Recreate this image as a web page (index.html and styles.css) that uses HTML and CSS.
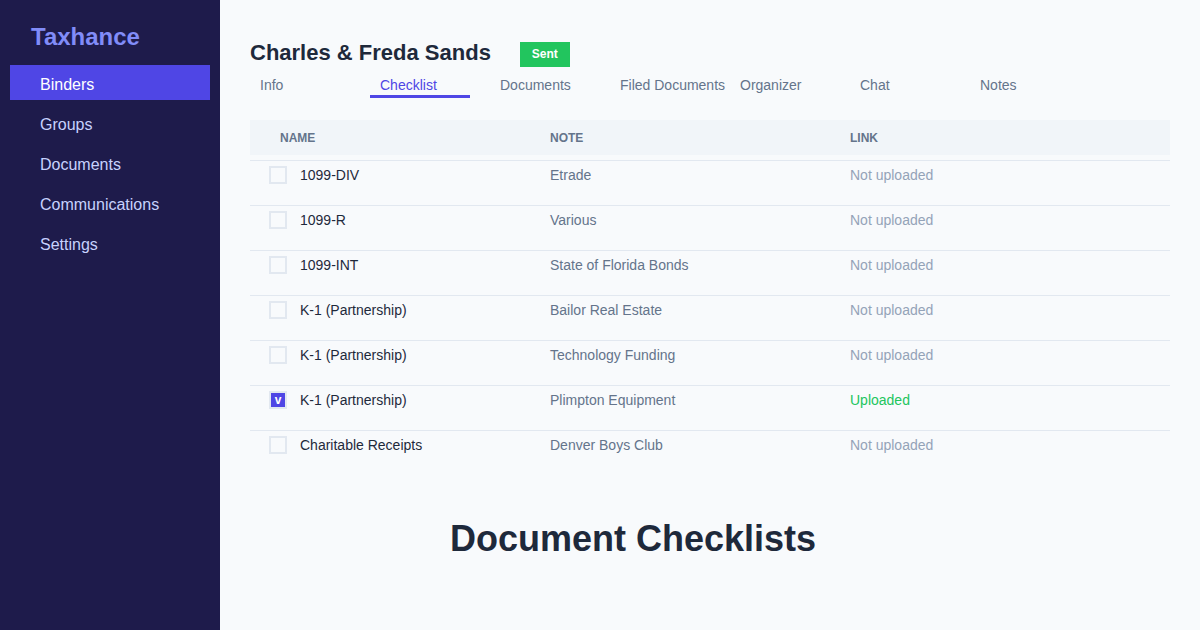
FILE: index.html
```html
<!DOCTYPE html>
<html>
<head>
<meta charset="utf-8">
<link rel="stylesheet" href="styles.css">
</head>
<body>
<div class="app">
  <aside class="sidebar">
    <div class="logo">Taxhance</div>
    <nav class="nav">
      <a class="nav-item active">Binders</a>
      <a class="nav-item">Groups</a>
      <a class="nav-item">Documents</a>
      <a class="nav-item">Communications</a>
      <a class="nav-item">Settings</a>
    </nav>
  </aside>
  <main class="main">
    <div class="head">
      <h1 class="client">Charles &amp; Freda Sands</h1>
      <span class="badge">Sent</span>
    </div>
    <div class="tabs">
      <span class="tab">Info</span>
      <span class="tab active">Checklist</span>
      <span class="tab">Documents</span>
      <span class="tab">Filed Documents</span>
      <span class="tab">Organizer</span>
      <span class="tab">Chat</span>
      <span class="tab">Notes</span>
    </div>
    <div class="table">
      <div class="thead">
        <span>Name</span><span>Note</span><span>Link</span>
      </div>
      <div class="tbody">
        <div class="row"><span class="name"><span class="box"></span>1099-DIV</span><span class="note">Etrade</span><span class="link">Not uploaded</span></div>
        <div class="row"><span class="name"><span class="box"></span>1099-R</span><span class="note">Various</span><span class="link">Not uploaded</span></div>
        <div class="row"><span class="name"><span class="box"></span>1099-INT</span><span class="note">State of Florida Bonds</span><span class="link">Not uploaded</span></div>
        <div class="row"><span class="name"><span class="box"></span>K-1 (Partnership)</span><span class="note">Bailor Real Estate</span><span class="link">Not uploaded</span></div>
        <div class="row"><span class="name"><span class="box"></span>K-1 (Partnership)</span><span class="note">Technology Funding</span><span class="link">Not uploaded</span></div>
        <div class="row"><span class="name"><span class="box checked">v</span>K-1 (Partnership)</span><span class="note">Plimpton Equipment</span><span class="link done">Uploaded</span></div>
        <div class="row"><span class="name"><span class="box"></span>Charitable Receipts</span><span class="note">Denver Boys Club</span><span class="link">Not uploaded</span></div>
      </div>
    </div>
    <h2 class="caption">Document Checklists</h2>
  </main>
</div>
</body>
</html>
```
FILE: styles.css
```css
* { box-sizing: border-box; }
html, body { margin: 0; padding: 0; }
body {
  font-family: "Liberation Sans", Arial, sans-serif;
  background: #f8fafc;
  width: 1200px;
  height: 630px;
  overflow: hidden;
}
.app { display: flex; height: 630px; }
.sidebar {
  width: 220px;
  flex: none;
  background: #1e1b4b;
  padding: 22px 10px 0;
}
.logo {
  font-size: 24px;
  font-weight: 700;
  color: #818cf8;
  line-height: 30px;
  padding-left: 21px;
  margin-bottom: 13px;
}
.nav { display: flex; flex-direction: column; gap: 5px; }
.nav-item {
  display: block;
  height: 35px;
  padding-top: 4px;
  line-height: 31px;
  padding-left: 30px;
  font-size: 16px;
  color: #c7d2fe;
}
.nav-item.active { background: #4f46e5; color: #ffffff; }
.main { flex: 1; padding: 40px 30px 0; }
.head { display: flex; align-items: center; gap: 29px; height: 26px; }
.client {
  margin: 0;
  font-size: 22px;
  line-height: 26px;
  font-weight: 700;
  color: #1e293b;
}
.badge {
  display: inline-block;
  width: 50px;
  height: 25px;
  line-height: 25px;
  margin-top: 2px;
  text-align: center;
  background: #22c55e;
  color: #fff;
  font-size: 12px;
  font-weight: 700;
}
.tabs { display: flex; gap: 20px; margin-top: 8px; }
.tab {
  width: 100px;
  flex: none;
  padding: 1px 10px 0;
  line-height: 20px;
  font-size: 14px;
  color: #64748b;
  white-space: nowrap;
  border-bottom: 3px solid transparent;
}
.tab.active { color: #4f46e5; border-bottom-color: #4f46e5; }
.table { margin-top: 22px; width: 920px; }
.thead {
  display: grid;
  grid-template-columns: 270px 300px 1fr;
  padding-left: 30px;
  height: 35px;
  align-items: center;
  background: #f1f5f9;
  font-size: 12px;
  font-weight: 700;
  color: #64748b;
  text-transform: uppercase;
}
.tbody { margin-top: 5px; }
.row {
  display: grid;
  grid-template-columns: 280px 300px 1fr;
  padding: 5px 0 21px 19px;
  border-top: 1px solid #e2e8f0;
  font-size: 14px;
  line-height: 18px;
  align-items: center;
}
.name { display: flex; align-items: center; gap: 13px; color: #1e293b; }
.note, .link { padding-left: 1px; }
.box {
  width: 18px;
  height: 18px;
  border: 2px solid #e2e8f0;
  background: #f8fafc;
  flex: none;
  font-size: 12px;
  font-weight: 700;
  color: #fff;
  text-align: center;
  line-height: 14px;
}
.box.checked { background: #4f46e5; }
.note { color: #64748b; }
.link { color: #94a3b8; }
.link.done { color: #22c55e; }
.caption {
  margin: 43px 0 0;
  padding-left: 200px;
  font-size: 36px;
  line-height: 42px;
  font-weight: 700;
  color: #1e293b;
}
```
